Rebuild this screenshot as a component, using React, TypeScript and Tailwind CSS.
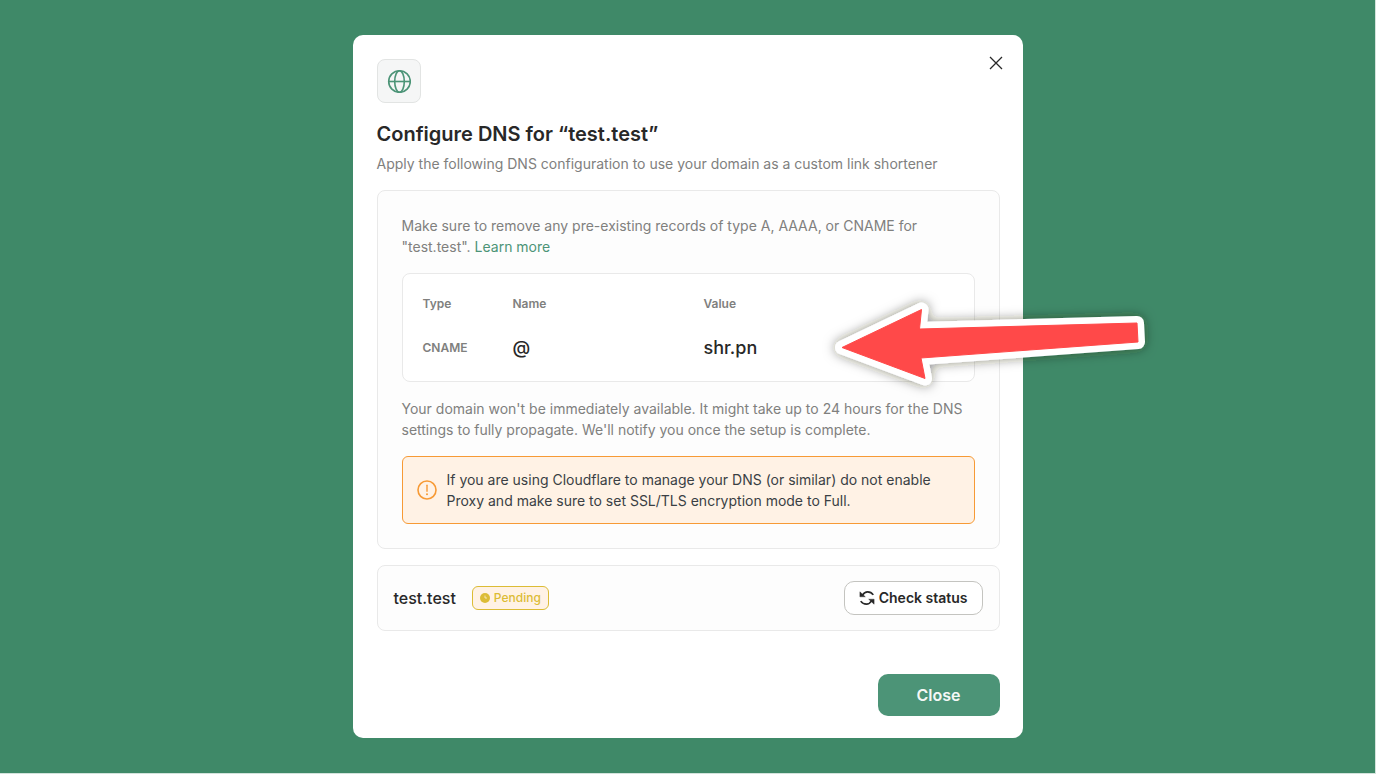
import { useState } from 'react';

const columns = ['Type', 'Name', 'Value'];

const records = [{ type: 'CNAME', name: '@', value: 'shr.pn' }];

function GlobeIcon() {
    return (
        <svg width="24" height="24" viewBox="0 0 24 24" fill="none" stroke="currentColor" strokeWidth="1.6" aria-hidden="true">
            <circle cx="12.5" cy="12.5" r="10.8" />
            <ellipse cx="12.5" cy="12.5" rx="4.8" ry="10.8" />
            <path d="M1.700 12.500h21.600" />
        </svg>
    );
}

function CloseIcon() {
    return (
        <svg width="14" height="14" viewBox="0 0 14 14" fill="none" stroke="currentColor" strokeWidth="1.3" aria-hidden="true">
            <path d="M1 1l12 12M13 1L1 13" />
        </svg>
    );
}

function WarningIcon() {
    return (
        <svg width="20" height="20" viewBox="0 0 20 20" fill="none" className="shrink-0" aria-hidden="true">
            <circle cx="10" cy="10" r="9" stroke="currentColor" strokeWidth="1.6" />
            <path d="M10 5.200v6" stroke="currentColor" strokeWidth="1.400" strokeLinecap="round" />
            <circle cx="10" cy="14.300" r="1" fill="currentColor" />
        </svg>
    );
}

function ClockIcon() {
    return (
        <svg width="10" height="10" viewBox="0 0 10 10" aria-hidden="true">
            <circle cx="5" cy="5" r="5" fill="currentColor" />
            <path d="M5 2.600V5h2" fill="none" stroke="#fff2e5" strokeWidth="0.700" />
        </svg>
    );
}

function RefreshIcon() {
    return (
        <svg width="16" height="16" viewBox="0 0 16 16" fill="none" stroke="currentColor" strokeWidth="1.600" aria-hidden="true">
            <path d="M3.500 5.200C4.800 3 6.400 1.900 8.600 1.900c2.300 0 4.300 1 5.700 3" />
            <path d="M12.500 10.800C11.200 13 9.600 14.100 7.400 14.100c-2.300 0-4.300-1-5.700-3" />
            <path d="M0.900 1.800v5h5.400z" fill="currentColor" strokeWidth="0.400" />
            <path d="M15.100 14.200v-5H9.700z" fill="currentColor" strokeWidth="0.400" />
        </svg>
    );
}

function Arrow() {
    return (
        <svg
            width="340"
            height="110"
            viewBox="0 0 340 110"
            className="pointer-events-none absolute -right-[137px] top-[255px] overflow-visible"
            aria-hidden="true"
        >
            <defs>
                <filter id="arrow-shadow" x="-15%" y="-40%" width="130%" height="180%">
                    <feDropShadow dx="0" dy="0" stdDeviation="6" floodColor="#1c1c10" floodOpacity="0.5" />
                </filter>
            </defs>
            <g filter="url(#arrow-shadow)" strokeLinejoin="round">
                <path
                    d="M22 57.500L101.500 19.500L99.500 39L317 33L318 52L101 68L105 88.500Z"
                    fill="#fff"
                    stroke="#fff"
                    strokeWidth="14"
                />
            </g>
            <path
                d="M22 57.500L101.500 19.500L99.500 39L317 33L318 52L101 68L105 88.500Z"
                fill="#ff4949"
                stroke="#ff4949"
                strokeWidth="1"
                strokeLinejoin="round"
            />
        </svg>
    );
}

export default function App() {
    const [open, setOpen] = useState(true);

    return (
        <main className="flex min-h-screen items-center justify-center border-r border-b border-[#d3e3dc] bg-[#3f8968] font-[Inter,sans-serif] text-[#282828]">
            {open && (
                <div
                    role="dialog"
                    aria-labelledby="dns-title"
                    className="relative w-full max-w-[670px] rounded-[10px] bg-white pt-6 pr-[23px] pb-[22px] pl-6"
                >
                    <div className="flex items-start justify-between">
                        <div className="flex size-11 items-center justify-center rounded-lg border border-[#e2e4e3] bg-[#f5f6f6] text-[#4c9477]">
                            <GlobeIcon />
                        </div>
                        <button
                            type="button"
                            aria-label="Dismiss"
                            onClick={() => setOpen(false)}
                            className="-mt-2 -mr-2 flex size-6 cursor-pointer items-center justify-center"
                        >
                            <CloseIcon />
                        </button>
                    </div>

                    <h1 id="dns-title" className="mt-[17px] text-xl leading-7 font-semibold">
                        Configure DNS for “test.test”
                    </h1>
                    <p className="mt-1 text-sm leading-6 text-[#80807e]">
                        Apply the following DNS configuration to use your domain as a custom link shortener
                    </p>

                    <section className="mt-3.5 rounded-lg border border-[#e9e9e9] bg-[#fdfdfd] p-6">
                        <p className="text-sm leading-[21px] text-[#80807e]">
                            Make sure to remove any pre-existing records of type A, AAAA, or CNAME for "test.test".{' '}
                            <a href="#learn-more" className="text-[#4c9477]">Learn more</a>
                        </p>

                        <div className="mt-4 rounded-lg border border-[#e9e9e9] bg-white px-5 pt-5 pb-[17px]">
                            <table className="w-full table-fixed text-left">
                                <colgroup>
                                    <col className="w-[90px]" />
                                    <col className="w-[191px]" />
                                    <col />
                                </colgroup>
                                <thead>
                                    <tr>
                                        {columns.map((column) => (
                                            <th key={column} className="p-0 text-xs leading-5 font-semibold text-[#80807e]">
                                                {column}
                                            </th>
                                        ))}
                                    </tr>
                                </thead>
                                <tbody>
                                    {records.map((record) => (
                                        <tr key={record.value}>
                                            <td className="pt-[18px] text-xs font-semibold text-[#80807e]">{record.type}</td>
                                            <td className="pt-[18px] text-lg leading-8 font-medium">{record.name}</td>
                                            <td className="pt-[18px] text-lg leading-8 font-medium">{record.value}</td>
                                        </tr>
                                    ))}
                                </tbody>
                            </table>
                        </div>

                        <p className="mt-4 text-sm leading-[21px] text-[#80807e]">
                            Your domain won't be immediately available. It might take up to 24 hours for the DNS settings to
                            fully propagate. We'll notify you once the setup is complete.
                        </p>

                        <div className="mt-4 flex items-center gap-2.5 rounded-md border border-[#f79a35] bg-[#fff2e5] py-3 pr-8 pl-3.5 text-[#f79a35]">
                            <WarningIcon />
                            <p className="text-sm leading-[21px] text-[#3a3f44]">
                                If you are using Cloudflare to manage your DNS (or similar) do not enable Proxy and make sure
                                to set SSL/TLS encryption mode to Full.
                            </p>
                        </div>
                    </section>

                    <section className="mt-4 flex items-center justify-between rounded-lg border border-[#e9e9e9] bg-[#fdfdfd] px-4 py-[15px]">
                        <div className="flex items-center gap-4">
                            <span className="text-base font-medium">test.test</span>
                            <span className="flex h-6 items-center gap-1 rounded-md border border-[#dcbc35] bg-[#fff2e5] px-[7px] text-xs font-medium text-[#dcbc35]">
                                <ClockIcon />
                                Pending
                            </span>
                        </div>
                        <button
                            type="button"
                            className="flex h-[34px] cursor-pointer items-center gap-1 rounded-[10px] border border-[#c4c4c0] bg-white px-3.5 text-sm font-semibold"
                        >
                            <RefreshIcon />
                            Check status
                        </button>
                    </section>

                    <div className="mt-[43px] flex justify-end">
                        <button
                            type="button"
                            onClick={() => setOpen(false)}
                            className="h-[42px] w-[122px] cursor-pointer rounded-[10px] bg-[#4c9477] text-base font-semibold text-[#f5f8f6]"
                        >
                            Close
                        </button>
                    </div>

                    <Arrow />
                </div>
            )}
        </main>
    );
}
